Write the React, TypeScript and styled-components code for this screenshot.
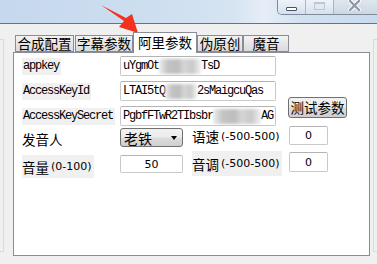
import React from "react";
import styled, { createGlobalStyle } from "styled-components";

const Global = createGlobalStyle`
  html, body { margin: 0; padding: 0; }
  body { width: 377px; height: 264px; overflow: hidden; background: #f0f0f0; }
  * { box-sizing: border-box; }
`;

const CJK = `"Noto Sans CJK SC", "Noto Sans", sans-serif`;
const MONO = `"Liberation Mono", "DejaVu Sans Mono", monospace`;
const SANS = `"DejaVu Sans", "Noto Sans CJK SC", sans-serif`;

const Window = styled.div`
  position: relative;
  width: 377px;
  height: 264px;
  overflow: hidden;
  font-family: ${CJK};
  color: #000;
`;

const TitleBar = styled.div`
  height: 24px;
  display: flex;
  justify-content: flex-end;
  align-items: flex-start;
  background: linear-gradient(90deg, #c6d8ed 0%, #cddef0 40%, #d6e4f2 62%, #e6eef8 70%, #d2e1f1 80%, #c9dbef 100%);
  border-bottom: 1px solid #6f7174;
`;

const Caption = styled.div`
  display: flex;
  height: 15px;
  border: 1px solid #7d8a9b;
  border-top: none;
  border-right: none;
  border-bottom-left-radius: 5px;
  overflow: hidden;
  margin-right: -2px;
`;

const CapBtn = styled.div<{ $w: number; $close?: boolean }>`
  width: ${(p) => p.$w}px;
  height: 100%;
  display: flex;
  align-items: center;
  justify-content: center;
  border-left: 1px solid #a9b6c6;
  &:first-child { border-left: none; }
  background: ${(p) =>
    p.$close
      ? "linear-gradient(#dfe6ee, #cdd7e3)"
      : "linear-gradient(#eef3f9, #d6e1ed)"};
`;

const MinGlyph = styled.div`
  width: 11px;
  height: 4px;
  margin-top: 4px;
  background: #fff;
  border: 1px solid #4a5462;
  border-radius: 1px;
`;

const MaxGlyph = styled.div`
  width: 11px;
  height: 8px;
  margin-top: -3px;
  border: 1px solid #b9c3cf;
  border-top-width: 2px;
  background: #e3e9f1;
  opacity: 0.9;
`;

const Body = styled.div`
  height: 240px;
  display: flex;
  align-items: flex-start;
`;

const SideLeft = styled.div`
  width: 4px;
  height: 213px;
  margin-top: 15px;
  border: 1px solid #dadada;
  border-left: none;
`;

const SideRight = styled.div`
  width: 4px;
  height: 213px;
  margin-top: 15px;
  margin-left: 3px;
  border: 1px solid #dadada;
  border-right: none;
`;

const TabArea = styled.div`
  margin-left: 9px;
  padding-top: 8px;
  width: 359px;
  display: flex;
  flex-direction: column;
`;

const TabStrip = styled.div`
  height: 20px;
  display: flex;
  align-items: flex-end;
  padding-left: 2px;
  position: relative;
  z-index: 1;
`;

const Tab = styled.div<{ $w: number; $gap?: number; $active?: boolean }>`
  width: ${(p) => p.$w}px;
  margin-left: ${(p) => p.$gap ?? 0}px;
  height: ${(p) => (p.$active ? 21 : 17)}px;
  margin-bottom: ${(p) => (p.$active ? -1 : 0)}px;
  border: 1px solid #898c95;
  border-bottom: ${(p) => (p.$active ? "none" : "1px solid #898c95")};
  background: ${(p) => (p.$active ? "#ffffff" : "linear-gradient(#f3f3f3, #e6e6e6 50%, #dadada)")};
  font-size: 13.5px;
  line-height: ${(p) => (p.$active ? 18 : 15)}px;
  text-align: center;
  white-space: nowrap;
`;

const Panel = styled.div`
  height: 204px;
  background: #fff;
  border: 1px solid #898c95;
  padding: 3px 0 0 8px;
`;

const TopGrid = styled.div`
  display: grid;
  grid-template-columns: 98px 156px 71px;
  grid-template-rows: 20px 20px 20px;
  row-gap: 5px;
`;

const KeyLabel = styled.div`
  align-self: center;
  justify-self: start;
  height: 17px;
  line-height: 17px;
  padding: 0 2px 0 1px;
  background: #f0f0f0;
  font-family: ${MONO};
  font-size: 12px;
  letter-spacing: -1.2px;
`;

const TextBox = styled.div<{ $center?: boolean; $mt?: number; $h?: number }>`
  height: ${(p) => p.$h ?? 20}px;
  margin-top: ${(p) => p.$mt ?? 0}px;
  border: 1px solid #c9c9c9;
  border-top-color: #b3b3b3;
  border-radius: 2px;
  background: #fff;
  display: flex;
  align-items: center;
  justify-content: ${(p) => (p.$center ? "center" : "flex-start")};
  padding-left: ${(p) => (p.$center ? 0 : 2)}px;
  overflow: hidden;
  white-space: nowrap;
  font-family: ${(p) => (p.$center ? SANS : MONO)};
  font-size: ${(p) => (p.$center ? 11 : 12)}px;
  letter-spacing: ${(p) => (p.$center ? 0 : -1.2)}px;
`;

const Blur = styled.span<{ $w: number }>`
  display: inline-block;
  flex: none;
  width: ${(p) => p.$w}px;
  height: 15px;
  background: linear-gradient(90deg, #eeeeee 0%, #c4c4c4 20%, #bdbdbd 45%, #d6d6d6 60%, #c8c8c8 80%, #f2f2f2 100%);
  filter: blur(1.6px);
`;

const TestButton = styled.button`
  grid-column: 3;
  grid-row: 2 / 4;
  align-self: start;
  margin: 16px 0 0 12px;
  height: 21px;
  width: 59px;
  padding: 0;
  border: 1px solid #707070;
  border-radius: 3px;
  background: linear-gradient(#f2f2f2 0%, #ebebeb 48%, #dddddd 52%, #cfcfcf 100%);
  font-family: ${CJK};
  font-size: 13.5px;
  line-height: 19px;
  color: #000;
`;

const BottomGrid = styled.div`
  display: grid;
  grid-template-columns: 98px 72px 97px 39px;
  grid-template-rows: 22px 27px;
  row-gap: 3px;
  align-items: start;
`;

const CnLabel = styled.div<{ $mt?: number; $h?: number; $bg?: boolean }>`
  justify-self: start;
  margin-top: ${(p) => p.$mt ?? 0}px;
  height: ${(p) => p.$h ?? 22}px;
  display: flex;
  align-items: center;
  gap: 2px;
  padding: 0 2px 0 0;
  background: ${(p) => (p.$bg ? "#f0f0f0" : "transparent")};
  font-size: 13.5px;
  white-space: nowrap;
`;

const Range = styled.span`
  font-family: ${SANS};
  font-size: 11px;
`;

const Select = styled.div`
  margin-top: 2px;
  width: 63px;
  height: 19px;
  border: 1px solid #707070;
  border-radius: 3px;
  background: linear-gradient(#f2f2f2 0%, #ebebeb 48%, #dddddd 52%, #cfcfcf 100%);
  display: flex;
  align-items: center;
  justify-content: space-between;
  padding: 0 5px 0 3px;
  font-size: 14px;
  &::after {
    content: "";
    border-left: 3.5px solid transparent;
    border-right: 3.5px solid transparent;
    border-top: 4px solid #000;
  }
`;

const ArrowSvg = styled.svg`
  position: absolute;
  left: 0;
  top: 0;
  pointer-events: none;
`;

export default function App() {
  return (
    <Window>
      <Global />
      <TitleBar>
        <Caption>
          <CapBtn $w={27}>
            <MinGlyph />
          </CapBtn>
          <CapBtn $w={28}>
            <MaxGlyph />
          </CapBtn>
          <CapBtn $w={46} $close>
            <svg width="13" height="11" viewBox="0 0 13 11" style={{ marginTop: -4, marginRight: 4 }}>
              <path d="M2 1 L11 10 M11 1 L2 10" stroke="#ffffff" strokeWidth="4.2" strokeLinecap="round" />
              <path d="M2 1 L11 10 M11 1 L2 10" stroke="#8f9aa7" strokeWidth="2.4" strokeLinecap="round" />
            </svg>
          </CapBtn>
        </Caption>
      </TitleBar>
      <Body>
        <SideLeft />
        <TabArea>
          <TabStrip>
            <Tab $w={59}>合成配置</Tab>
            <Tab $w={58} $gap={1}>字幕参数</Tab>
            <Tab $w={64} $active>阿里参数</Tab>
            <Tab $w={46}>伪原创</Tab>
            <Tab $w={46} $gap={0}>魔音</Tab>
          </TabStrip>
          <Panel>
            <TopGrid>
              <KeyLabel>appkey</KeyLabel>
              <TextBox>
                uYgmOt<Blur $w={42} />TsD
              </TextBox>
              <div />
              <KeyLabel>AccessKeyId</KeyLabel>
              <TextBox>
                LTAI5tQ<Blur $w={32} />2sMaigcuQas
              </TextBox>
              <TestButton>测试参数</TestButton>
              <KeyLabel>AccessKeySecret</KeyLabel>
              <TextBox>
                PgbfFTwR2TIbsbr<Blur $w={48} />AG
              </TextBox>
            </TopGrid>
            <BottomGrid>
              <CnLabel $mt={3} $h={20}>发音人</CnLabel>
              <Select>老铁</Select>
              <CnLabel $h={20}>
                语速<Range>(-500-500)</Range>
              </CnLabel>
              <TextBox $center $h={19}>0</TextBox>
              <CnLabel $mt={4} $h={23} $bg>
                音量<Range>(0-100)</Range>
              </CnLabel>
              <TextBox $center $mt={4} $h={18} style={{ width: 63 }}>50</TextBox>
              <CnLabel $h={25} $bg>
                音调<Range>(-500-500)</Range>
              </CnLabel>
              <TextBox $center $mt={1} $h={20}>0</TextBox>
            </BottomGrid>
          </Panel>
        </TabArea>
        <SideRight />
      </Body>
      <ArrowSvg width="377" height="264" viewBox="0 0 377 264">
        <polygon points="101,5 126,18 132,14 138,33 119,27 124,21" fill="#f2311f" />
      </ArrowSvg>
    </Window>
  );
}
